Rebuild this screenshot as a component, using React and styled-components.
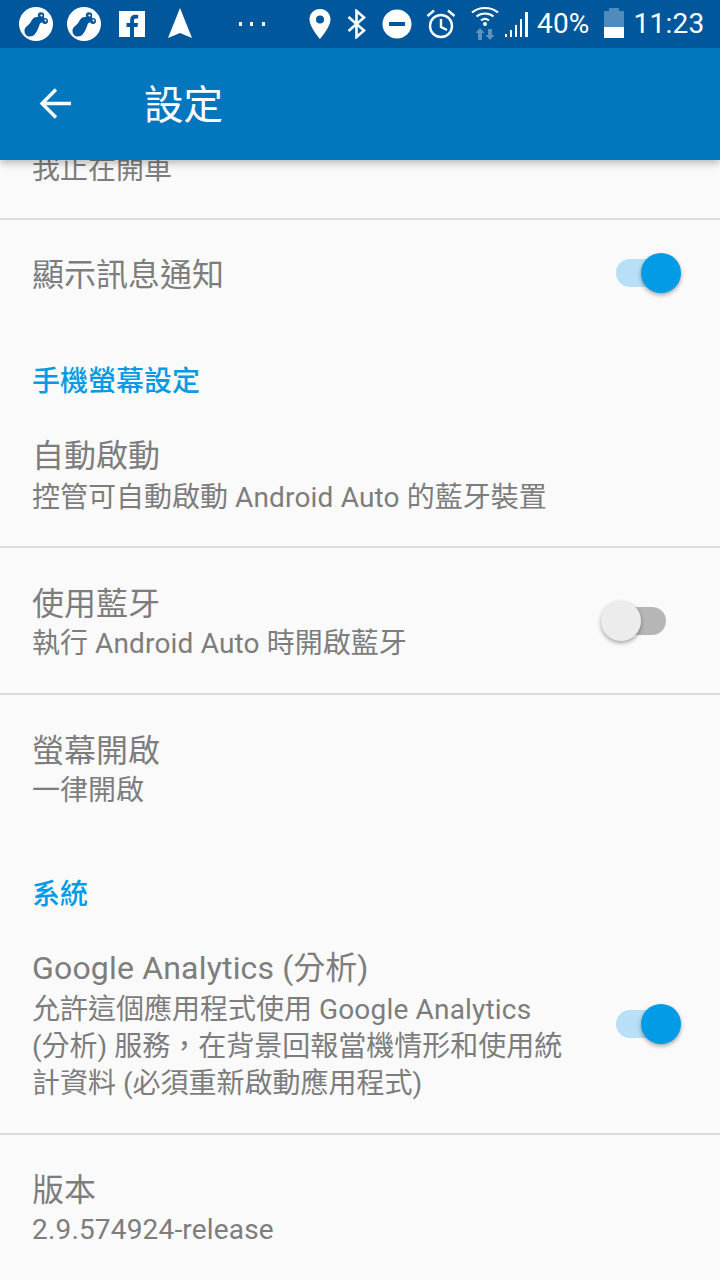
import React from "react";
import styled, { createGlobalStyle } from "styled-components";

const Global = createGlobalStyle`
  html, body { margin: 0; padding: 0; background: #fafafa; }
  * { box-sizing: border-box; }
`;
const Screen = styled.div`
  width: 720px; height: 1280px; overflow: hidden; display: flex; flex-direction: column;
  background: #fafafa; font-family: Roboto, "Noto Sans CJK TC", sans-serif; color: #7d7d7d;
`;
const StatusBar = styled.div`
  height: 48px; flex: none; background: #01579b; display: flex; align-items: center;
  color: #fff; padding: 0 0 0 19px; position: relative; z-index: 3;
`;
const IconSlot = styled.span`
  display: flex; flex: none; width: ${p => p.$w}px; height: 48px; align-items: center; justify-content: center;
  margin-left: ${p => p.$ml || 0}px;
`;
const StatusText = styled.span`
  font-size: 28px; line-height: 50px; margin-left: ${p => p.$ml || 0}px; flex: none; letter-spacing: .2px;
`;
const AppBar = styled.header`
  height: 112px; flex: none; background: #0277bd; display: flex; align-items: center;
  padding: 0 0 0 39px; color: #fff; position: relative; z-index: 2;
  box-shadow: 0 3px 8px rgba(0,0,0,.28);
`;
const Title = styled.h1`
  margin: 3px 0 0 71px; font-size: 39.5px; font-weight: 400; line-height: 60px;
`;
const List = styled.main`
  flex: 1; overflow: hidden; display: flex; flex-direction: column;
`;
const Row = styled.div`
  height: ${p => p.$h}px; flex: none; padding: 0 54px 0 32px; display: flex; align-items: ${p => p.$top ? "flex-start" : "center"};
  justify-content: space-between; border-bottom: ${p => p.$line ? "2px solid #dcdcdc" : "0"};
`;
const Texts = styled.div`
  display: flex; flex-direction: column; min-width: 0; margin-top: ${p => p.$mt || 0}px;
`;
const RowTitle = styled.div`
  font-size: 32px; line-height: 42px; white-space: nowrap;
`;
const Sub = styled.div`
  font-size: 28px; line-height: 37px; margin-top: ${p => p.$mt ?? 0}px; white-space: nowrap;
`;
const Latin = styled.span`
  letter-spacing: .18px;
`;
const Section = styled.div`
  height: ${p => p.$h}px; flex: none; padding: ${p => p.$pt}px 32px 0; font-size: 28px; font-weight: 500; color: #039be5;
  display: flex; align-items: center;
`;
const Toggle = styled.span`
  position: relative; flex: none; width: 50px; height: 28px; border-radius: 14px;
  background: ${p => p.$on ? "#b7e0f6" : "#b6b6b6"};
  margin-top: ${p => p.$mt || 0}px;
  &::after {
    content: ""; position: absolute; top: -6px; width: 40px; height: 40px; border-radius: 50%;
    ${p => p.$on ? "right: -15px; background: #039be5;" : "left: -15px; background: #ececec;"}
    box-shadow: 0 2px 4px rgba(0,0,0,.35);
  }
`;

const NotifyLogo = () => (
  <svg width="34" height="34" viewBox="0 0 34 34">
    <circle cx="17" cy="17" r="17" fill="#fff" />
    <path d="M5.500 23.500C5.500 20 9.500 18.500 11.500 15.500 13 13 14.500 10 17.500 10 20 10 21.500 12.500 21 15.500 20.500 19 18 24.500 16 27 14.500 28.800 12.500 29.500 10.500 29.500 7.500 29.500 5.500 27 5.500 23.500z" fill="#01579b" />
    <path d="M18 11L22 7 27 13 20 17z" fill="#01579b" />
    <circle cx="22" cy="8.500" r="3.200" fill="#01579b" />
    <circle cx="26" cy="14" r="3" fill="#01579b" />
    <circle cx="22.500" cy="8.500" r="1.100" fill="#fff" />
    <circle cx="26.500" cy="13.500" r="1" fill="#fff" />
  </svg>
);
const Facebook = () => (
  <svg width="26" height="26" viewBox="0 0 26 26">
    <path fillRule="evenodd" fill="#fff" d="M0 0h26v26H0zM15 26v-10h3.500l.5-4h-4V9.500c0-1.200.4-2 2-2h2.200V4c-.5-.1-1.800-.2-3-.2-3 0-5 1.800-5 5V12H7.500v4H11v10z" />
  </svg>
);
const Nav = () => (
  <svg width="26" height="32" viewBox="0 0 26 32"><path d="M13 0L25 30 13 25 1 30z" fill="#fff" /></svg>
);
const Pin = () => (
  <svg width="22" height="30" viewBox="0 0 22 30">
    <path fillRule="evenodd" fill="#fff" d="M11 0C5 0 .5 4.600.5 10.500.5 18 11 30 11 30s10.500-12 10.500-19.500C21.500 4.600 17 0 11 0zm0 14.500a4 4 0 1 1 0-8 4 4 0 0 1 0 8z" />
  </svg>
);
const Bluetooth = () => (
  <svg width="20" height="30" viewBox="0 0 20 30" fill="none" stroke="#fff" strokeWidth="2.600">
    <path d="M1.500 8L17 21.500 9.500 28V2L17 8.500 1.500 22" />
  </svg>
);
const Dnd = () => (
  <svg width="30" height="30" viewBox="0 0 30 30">
    <circle cx="15" cy="15" r="14.500" fill="#fff" /><rect x="7" y="13" width="16" height="4" fill="#01579b" />
  </svg>
);
const Alarm = () => (
  <svg width="30" height="30" viewBox="0 0 30 30" fill="none" stroke="#fff" strokeWidth="2.400">
    <circle cx="15" cy="17" r="11" />
    <path d="M15 10v8l6 3" /><path d="M1.500 7L8 1.500M28.500 7L22 1.500" />
  </svg>
);
const Wifi = () => (
  <svg width="28" height="36" viewBox="0 0 28 36">
    <g fill="none" stroke="#fff" strokeWidth="2.200">
      <path d="M1 6.500C8 .5 20 .5 27 6.500" />
      <path d="M5.500 10.500c5-4 12-4 17 0" />
      <path d="M10 14.500c2.500-2 5.500-2 8 0" />
    </g>
    <circle cx="14" cy="18" r="2" fill="#fff" />
    <path d="M9 22l4.500 5H11v7H7v-7H4.500zM19 34l-4.500-5H17v-6h4v6h2.500z" fill="#5c93c0" />
  </svg>
);
const Signal = () => (
  <svg width="25" height="25" viewBox="0 0 25 25" fill="#fff">
    <rect x="0" y="22" width="2" height="3" /><rect x="5" y="18" width="2" height="7" />
    <rect x="10" y="13" width="2" height="12" /><rect x="15" y="7" width="2" height="18" />
    <rect x="20" y="0" width="3" height="25" />
  </svg>
);
const Battery = () => (
  <svg width="20" height="32" viewBox="0 0 20 32">
    <path d="M5 0h10v3h5v16H0V3h5z" fill="#4f8cbd" /><rect y="19" width="20" height="11" fill="#fff" />
  </svg>
);
const Dots = () => (
  <svg width="26" height="4" viewBox="0 0 26 4" fill="#fff">
    <rect width="3" height="4" /><rect x="11" width="3" height="4" /><rect x="23" width="3" height="4" />
  </svg>
);
const Back = () => (
  <svg width="34" height="34" viewBox="0 0 34 34" fill="none" stroke="#fff" strokeWidth="3.400">
    <path d="M32 16.500H3M17 2.500L3 16.500 17 30.500" />
  </svg>
);

export default function App() {
  return (
    <Screen>
      <Global />
      <StatusBar>
        <IconSlot $w={34}><NotifyLogo /></IconSlot>
        <IconSlot $w={34} $ml={14}><NotifyLogo /></IconSlot>
        <IconSlot $w={26} $ml={18}><Facebook /></IconSlot>
        <IconSlot $w={26} $ml={22}><Nav /></IconSlot>
        <IconSlot $w={26} $ml={46}><Dots /></IconSlot>
        <IconSlot $w={22} $ml={44}><Pin /></IconSlot>
        <IconSlot $w={20} $ml={16}><Bluetooth /></IconSlot>
        <IconSlot $w={30} $ml={15}><Dnd /></IconSlot>
        <IconSlot $w={30} $ml={14}><Alarm /></IconSlot>
        <IconSlot $w={28} $ml={15}><Wifi /></IconSlot>
        <IconSlot $w={25} $ml={6}><Signal /></IconSlot>
        <StatusText $ml={7}>40%</StatusText>
        <IconSlot $w={20} $ml={14}><Battery /></IconSlot>
        <StatusText $ml={10}>11:23</StatusText>
      </StatusBar>
      <AppBar>
        <Back />
        <Title>設定</Title>
      </AppBar>
      <List>
        <Row $h={60} $line $top>
          <Sub $mt={-9}>我止在開車</Sub>
        </Row>
        <Row $h={110}>
          <RowTitle>顯示訊息通知</RowTitle>
          <Toggle $on $mt={-4} />
        </Row>
        <Section $h={74} $pt={24}>手機螢幕設定</Section>
        <Row $h={144} $line>
          <Texts>
            <RowTitle>自動啟動</RowTitle>
            <Sub $mt={2}>控管可自動啟動 <Latin>Android Auto</Latin> 的藍牙裝置</Sub>
          </Texts>
        </Row>
        <Row $h={147} $line>
          <Texts $mt={4}>
            <RowTitle>使用藍牙</RowTitle>
            <Sub>執行 <Latin>Android Auto</Latin> 時開啟藍牙</Sub>
          </Texts>
          <Toggle />
        </Row>
        <Row $h={148}>
          <Texts>
            <RowTitle>螢幕開啟</RowTitle>
            <Sub>一律開啟</Sub>
          </Texts>
        </Row>
        <Section $h={76} $pt={22}>系統</Section>
        <Row $h={216} $line>
          <Texts $mt={-4}>
            <RowTitle><Latin>Google Analytics</Latin> (分析)</RowTitle>
            <Sub $mt={2}>允許這個應用程式使用 <Latin>Google Analytics</Latin></Sub>
            <Sub>(分析) 服務，在背景回報當機情形和使用統</Sub>
            <Sub>計資料 (必須重新啟動應用程式)</Sub>
          </Texts>
          <Toggle $on $mt={-4} />
        </Row>
        <Row $h={146}>
          <Texts>
            <RowTitle>版本</RowTitle>
            <Sub><Latin>2.9.574924-release</Latin></Sub>
          </Texts>
        </Row>
      </List>
    </Screen>
  );
}
